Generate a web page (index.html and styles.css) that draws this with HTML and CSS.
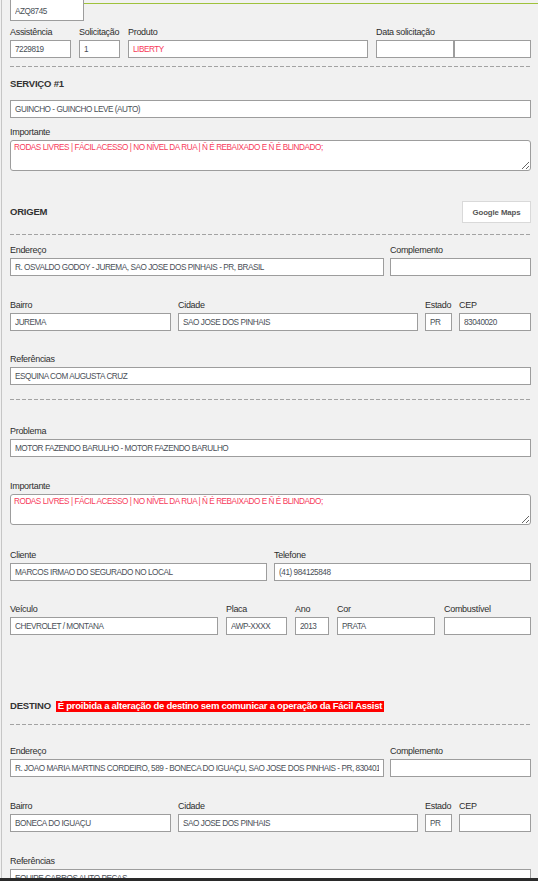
FILE: index.html
```html
<!DOCTYPE html>
<html lang="pt-BR">
<head>
<meta charset="utf-8">
<title>Serviço</title>
<link rel="stylesheet" href="styles.css">
</head>
<body>
<div class="page">
  <div class="toprow">
    <input class="inp inp-first" value="AZQ8745" readonly>
    <div class="greenline"></div>
  </div>

  <div class="grid g-head mt5">
    <div class="field"><label class="lbl">Assistência</label><input class="inp" value="7229819" readonly></div>
    <div class="field"><label class="lbl">Solicitação</label><input class="inp" value="1" readonly></div>
    <div class="field"><label class="lbl">Produto</label><input class="inp red" value="LIBERTY" readonly></div>
    <div class="field"><label class="lbl">Data solicitação</label>
      <div class="pair"><input class="inp date1" readonly><input class="inp date2" readonly></div>
    </div>
  </div>

  <div class="dash mt8"></div>
  <div class="title mt11">SERVIÇO #1</div>
  <input class="inp mt10" value="GUINCHO - GUINCHO LEVE (AUTO)" readonly>
  <div class="field mt8"><label class="lbl">Importante</label><textarea class="ta" readonly>RODAS LIVRES | FÁCIL ACESSO | NO NÍVEL DA RUA | Ñ É REBAIXADO E Ñ É BLINDADO;</textarea></div>

  <div class="titlerow mt30"><span class="title">ORIGEM</span><button class="btn" type="button">Google Maps</button></div>
  <div class="dash mt11"></div>

  <div class="grid g-addr mt9">
    <div class="field"><label class="lbl">Endereço</label><input class="inp" value="R. OSVALDO GODOY - JUREMA, SÃO JOSÉ DOS PINHAIS - PR, BRASIL" readonly></div>
    <div class="field"><label class="lbl">Complemento</label><input class="inp" readonly></div>
  </div>
  <div class="grid g-bairro mt23">
    <div class="field"><label class="lbl">Bairro</label><input class="inp" value="JUREMA" readonly></div>
    <div class="field"><label class="lbl">Cidade</label><input class="inp" value="SÃO JOSÉ DOS PINHAIS" readonly></div>
    <div class="field"><label class="lbl">Estado</label><input class="inp" value="PR" readonly></div>
    <div class="field"><label class="lbl">CEP</label><input class="inp" value="83040020" readonly></div>
  </div>
  <div class="field mt22"><label class="lbl">Referências</label><input class="inp" value="ESQUINA COM AUGUSTA CRUZ" readonly></div>

  <div class="dash mt14"></div>

  <div class="field mt25"><label class="lbl">Problema</label><input class="inp" value="MOTOR FAZENDO BARULHO - MOTOR FAZENDO BARULHO" readonly></div>
  <div class="field mt23"><label class="lbl">Importante</label><textarea class="ta" readonly>RODAS LIVRES | FÁCIL ACESSO | NO NÍVEL DA RUA | Ñ É REBAIXADO E Ñ É BLINDADO;</textarea></div>

  <div class="grid g-cli mt24">
    <div class="field"><label class="lbl">Cliente</label><input class="inp" value="MARCOS IRMÃO DO SEGURADO NO LOCAL" readonly></div>
    <div class="field"><label class="lbl">Telefone</label><input class="inp" value="(41) 984125848" readonly></div>
  </div>
  <div class="grid g-veic mt22">
    <div class="field"><label class="lbl">Veículo</label><input class="inp" value="CHEVROLET / MONTANA" readonly></div>
    <div class="field"><label class="lbl">Placa</label><input class="inp" value="AWP-XXXX" readonly></div>
    <div class="field"><label class="lbl">Ano</label><input class="inp" value="2013" readonly></div>
    <div class="field"><label class="lbl">Cor</label><input class="inp" value="PRATA" readonly></div>
    <div class="field shift1"><label class="lbl">Combustível</label><input class="inp" readonly></div>
  </div>

  <div class="title mt65">DESTINO<span class="warn">É proibida a alteração de destino sem comunicar a operação da Fácil Assist</span></div>
  <div class="dash mt12"></div>

  <div class="grid g-addr mt20">
    <div class="field"><label class="lbl">Endereço</label><input class="inp" value="R. JOÃO MARIA MARTINS CORDEIRO, 589 - BONECA DO IGUAÇU, SÃO JOSÉ DOS PINHAIS - PR, 83040130, BRASIL" readonly></div>
    <div class="field"><label class="lbl">Complemento</label><input class="inp" readonly></div>
  </div>
  <div class="grid g-bairro mt23">
    <div class="field"><label class="lbl">Bairro</label><input class="inp" value="BONECA DO IGUAÇU" readonly></div>
    <div class="field"><label class="lbl">Cidade</label><input class="inp" value="SÃO JOSÉ DOS PINHAIS" readonly></div>
    <div class="field"><label class="lbl">Estado</label><input class="inp" value="PR" readonly></div>
    <div class="field"><label class="lbl">CEP</label><input class="inp" readonly></div>
  </div>
  <div class="field mt23"><label class="lbl">Referências</label><input class="inp" value="EQUIPE CARROS AUTO PECAS" readonly></div>
</div>
<div class="statusbar"></div>
</body>
</html>
```

FILE: styles.css
```css
* { box-sizing: border-box; }
html, body { margin: 0; padding: 0; background: #f1f1f1; }
body {
  font-family: "Liberation Sans", Arial, sans-serif;
  color: #2e2e2e;
  height: 881px;
  overflow: hidden;
}
.page {
  margin-left: 1px;
  border-left: 1px solid #c6c6c6;
  padding: 0 7px 0 8px;
  min-height: 881px;
}
.toprow { display: flex; align-items: flex-start; margin-right: -7px; }
.greenline { flex: 1; height: 1px; margin-top: 3px; background: #9fc23c; }

.inp {
  display: block;
  width: 100%;
  height: 18px;
  margin: 0;
  padding: 0 4px;
  border: 1px solid #9d9d9d;
  border-radius: 0;
  background: #fff;
  font-family: "Liberation Sans", Arial, sans-serif;
  font-size: 8.2px;
  letter-spacing: -0.45px;
  color: #4a4f57;
  outline: none;
}
.inp-first { width: 74px; height: 21px; border-top: 0; padding-top: 2px; flex: none; }
.red { color: #f73b5b; }

.field { display: block; }
.lbl {
  display: block;
  height: 12px;
  line-height: 12px;
  margin-bottom: 2px;
  font-size: 9px;
  letter-spacing: -0.3px;
  white-space: nowrap;
  color: #2e2e2e;
}

.grid { display: grid; }
.g-head { grid-template-columns: 61px 41px 240px 155px; column-gap: 8px; }
.g-addr { grid-template-columns: 374px 141px; column-gap: 6px; }
.g-bairro { grid-template-columns: 161px 240px 27px 72px; column-gap: 7px; }
.g-cli { grid-template-columns: 257px 257px; column-gap: 7px; }
.g-veic { grid-template-columns: 208px 61px 34px 98px 1fr; column-gap: 8px; }
.shift1 { margin-left: 1px; }

.pair { display: flex; }
.date1 { width: 78px; }
.date2 { width: 77px; }

.dash {
  height: 1px;
  background: repeating-linear-gradient(to right, #a3a3a3 0 4px, transparent 4px 6px);
}

.title {
  font-weight: bold;
  font-size: 9.5px;
  letter-spacing: -0.2px;
  line-height: 12px;
  height: 12px;
  color: #333;
  white-space: nowrap;
}
.titlerow {
  display: flex;
  justify-content: space-between;
  align-items: center;
  height: 22px;
}
.btn {
  width: 69px;
  height: 22px;
  margin: 0;
  padding: 0;
  background: #fff;
  border: 1px solid #d9d9d9;
  font-family: "Liberation Sans", Arial, sans-serif;
  font-weight: bold;
  font-size: 7.8px;
  letter-spacing: -0.1px;
  color: #555;
}
.warn {
  display: inline-block;
  margin-left: 5px;
  padding: 0 2px;
  background: #ff0000;
  color: #fff;
  font-size: 9.5px;
  letter-spacing: -0.25px;
  line-height: 10.5px;
}

.ta {
  display: block;
  width: 100%;
  height: 31px;
  margin: 0;
  padding: 1px 3px;
  border: 1px solid #9d9d9d;
  border-radius: 3px;
  background: #fff;
  font-family: "Liberation Sans", Arial, sans-serif;
  font-size: 8.2px;
  letter-spacing: -0.45px;
  line-height: 11px;
  color: #f73b5b;
  outline: none;
}

.statusbar {
  position: fixed;
  left: 0;
  right: 0;
  bottom: 0;
  height: 3px;
  background: #2a2a2a;
}

.mt5 { margin-top: 5px; }
.mt8 { margin-top: 8px; }
.mt9 { margin-top: 9px; }
.mt10 { margin-top: 10px; }
.mt11 { margin-top: 11px; }
.mt12 { margin-top: 12px; }
.mt14 { margin-top: 14px; }
.mt20 { margin-top: 20px; }
.mt22 { margin-top: 22px; }
.mt23 { margin-top: 23px; }
.mt24 { margin-top: 24px; }
.mt25 { margin-top: 25px; }
.mt30 { margin-top: 30px; }
.mt65 { margin-top: 65px; }
```
